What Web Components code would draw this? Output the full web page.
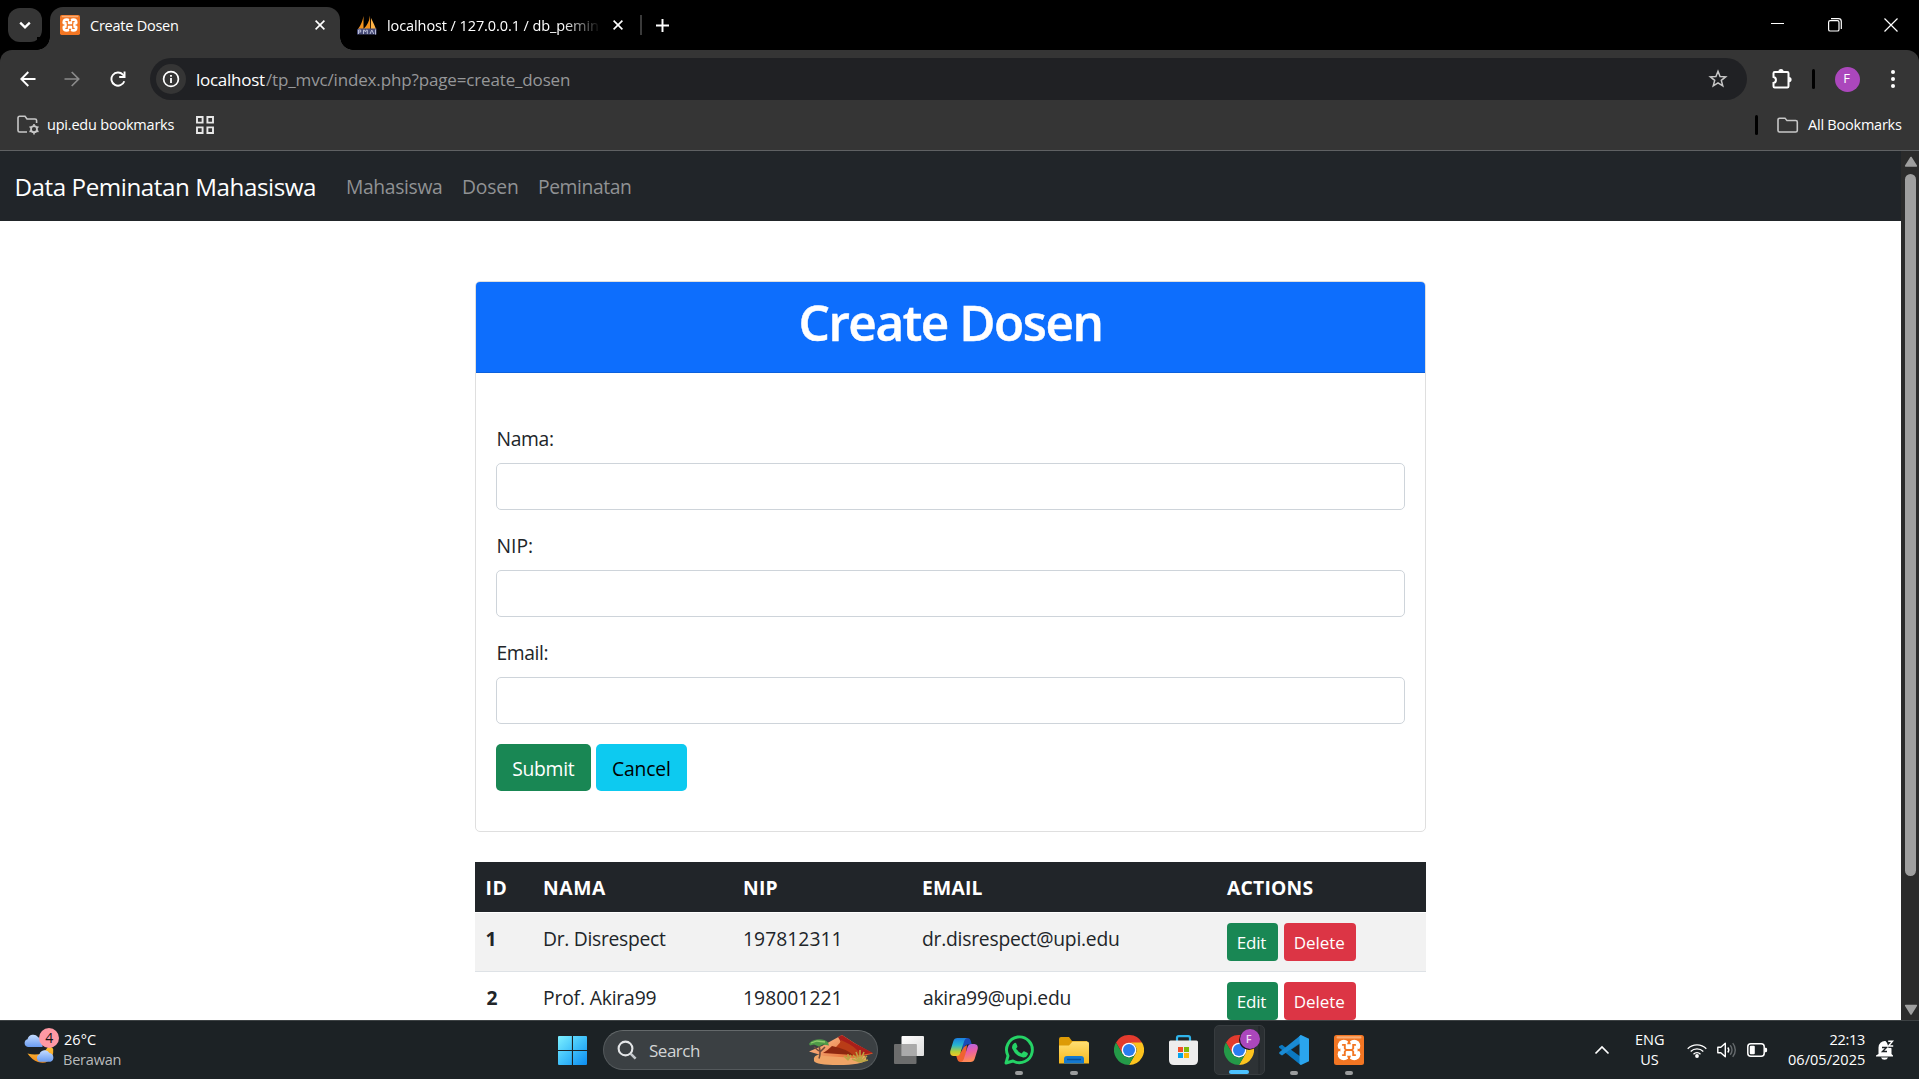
<!DOCTYPE html>
<html lang="en">
<head>
<meta charset="utf-8">
<title>Create Dosen</title>
<style>
html,body{margin:0;height:100%;overflow:hidden;background:#000}
body{font-family:"Open Sans","Noto Sans",sans-serif}
</style>
</head>
<body>
<desktop-screen></desktop-screen>
<script>
const ICONS = {
  chevdown: ['0 0 10 10', '<path d="M1 3l4 4 4-4" fill="none" stroke="currentColor" stroke-width="1.9"/>'],
  chevup: ['0 0 16 10', '<path d="M1.5 8.5L8 2l6.500 6.500" fill="none" stroke="currentColor" stroke-width="1.7"/>'],
  cross: ['0 0 10 10', '<path d="M.6.6l8.800 8.800M9.400.6L.6 9.400" stroke="currentColor" stroke-width="1.6"/>'],
  winclose: ['0 0 14 14', '<path d="M.5.5l13 13M13.500.5l-13 13" stroke="currentColor" stroke-width="1.2"/>'],
  winmin: ['0 0 14 14', '<path d="M0 5.500h13" stroke="currentColor" stroke-width="1"/>'],
  winmax: ['0 0 14 14', '<rect x=".6" y="2.600" width="10.400" height="10.400" rx="1.600" fill="none" stroke="currentColor" stroke-width="1.200"/><path d="M3 .7h7.500a2.800 2.800 0 0 1 2.800 2.800v7.500" fill="none" stroke="currentColor" stroke-width="1.200"/>'],
  plus: ['0 0 12 12', '<path d="M6 0v12M0 6h12" stroke="currentColor" stroke-width="1.800"/>'],
  back: ['0 0 16 16', '<path d="M8.300 1L1.300 8l7 7M1.500 8H15.500" fill="none" stroke="currentColor" stroke-width="1.900"/>'],
  forward: ['0 0 16 16', '<path d="M7.700 1l7 7-7 7M14.500 8H.5" fill="none" stroke="currentColor" stroke-width="1.700"/>'],
  reload: ['0 0 16 16', '<path d="M14.300 10.200A6.600 6.600 0 1 1 12.900 3.600L14.300 5" fill="none" stroke="currentColor" stroke-width="1.900"/><path d="M15.500.6v6.300H9.200V5h4.400V.6z" fill="currentColor"/>'],
  info: ['0 0 18 18', '<circle cx="9" cy="9" r="7.400" fill="none" stroke="currentColor" stroke-width="1.700"/><path d="M9 8v5M9 4.900v1.900" stroke="currentColor" stroke-width="1.800"/>'],
  star: ['0 0 20 20', '<path d="M10 2.200l2.050 5.250 5.650.350-4.400 3.600 1.450 5.500L10 13.850 5.250 16.900l1.450-5.500L2.300 7.800l5.650-.350z" fill="none" stroke="currentColor" stroke-width="1.500"/>'],
  puzzle: ['0 0 22 22', '<path d="M2.500 5.200q0-1.200 1.200-1.200H16.300q1.200 0 1.200 1.200V18.300q0 1.200-1.200 1.200H3.700q-1.200 0-1.200-1.200V14.900a3 3 0 0 0 0-5.900z" fill="none" stroke="currentColor" stroke-width="2"/><path d="M7.400 3.500a2.600 2.600 0 0 1 5.200 0zM18 9a2.600 2.600 0 0 1 0 5.200z" fill="currentColor"/>'],
  dots: ['0 0 6 20', '<g fill="currentColor"><circle cx="3" cy="3" r="2"/><circle cx="3" cy="10" r="2"/><circle cx="3" cy="17" r="2"/></g>'],
  folder: ['0 0 22 18', '<path d="M1 3q0-1.800 1.800-1.800H8L10 3.800h8.700q1.600 0 1.600 1.600v9q0 1.600-1.600 1.600H2.600Q1 16 1 14.400z" fill="none" stroke="currentColor" stroke-width="1.600"/>'],
  gearfolder: ['0 0 23 20', '<path d="M10 17H2.600Q1 17 1 15.400V3q0-1.700 1.700-1.700H8L10 4h8q1.600 0 1.600 1.600V8" fill="none" stroke="currentColor" stroke-width="1.600"/><circle cx="17" cy="14.200" r="3" fill="none" stroke="currentColor" stroke-width="1.800"/><path d="M17 9v2M17 17.500v2M12.500 11.600l1.700 1M19.800 15.800l1.700 1M12.500 16.800l1.700-1M19.800 12.600l1.700-1" stroke="currentColor" stroke-width="1.600"/>'],
  grid: ['0 0 18 18', '<path d="M1 1h5.600v5.600H1zM11.400 1H17v5.600h-5.600zM1 11.400h5.600V17H1zM11.400 11.400H17V17h-5.600z" fill="none" stroke="currentColor" stroke-width="1.900"/>'],
  xampp: ['0 0 30 30', '<rect width="30" height="30" rx="2.500" fill="#f37623"/><rect x="2.500" y="1.300" width="25" height="2.200" rx="1" fill="#fbc9a0" opacity=".65"/><g fill="#fff"><circle cx="9.800" cy="10.800" r="6.100"/><circle cx="20.200" cy="10.800" r="6.100"/><circle cx="9.800" cy="19.200" r="6.100"/><circle cx="20.200" cy="19.200" r="6.100"/></g><path d="M2.800 15l3.600-1.600v3.200zM27.200 15l-3.600-1.600v3.200zM15 4l-2 5.200h4zM15 26l-2-5.200h4z" fill="#f37623"/><path d="M8.800 9.900h2v3.600l1.300 1.500-1.300 1.500v3.600h-2M21.200 9.900h-2v3.600L17.900 15l1.300 1.500v3.600h2M12 15h6" fill="none" stroke="#f37623" stroke-width="1.900" stroke-linecap="round"/>'],
  pma: ['0 0 20 20', '<path d="M6.500 1Q5 9 1 14h5.500zM13 .5Q12 9 6.500 14h6.800z" fill="#f5931e"/><path d="M14 3q3 6 5 11h-5z" fill="#ffb347"/><path d="M0 14.500L2 13.500H19.500V19.500H0z" fill="#474c78"/><path d="M1.500 19v-4h2.200v2H2M6.500 19v-4h.9l1 2 1-2h.9v4M13 19l1.800-4 2 4M18.500 14.500v5" fill="none" stroke="#b9bcd6" stroke-width="1"/>'],
  tri: ['0 0 14 12', '<path d="M7 1.500L12.300 10H1.700z" fill="#9f9f9f" stroke="#9f9f9f" stroke-width="1.600" stroke-linejoin="round"/>'],
  tridown: ['0 0 14 12', '<path d="M7 10L12.300 1.500H1.700z" fill="#9f9f9f" stroke="#9f9f9f" stroke-width="1.600" stroke-linejoin="round"/>'],
  weather: ['0 0 36 36', '<defs><linearGradient id="c" x2="0" y2="1"><stop stop-color="#c4dcff"/><stop offset="1" stop-color="#6a9cf0"/></linearGradient><linearGradient id="m" x2="0" y2="1"><stop stop-color="#ffc436"/><stop offset="1" stop-color="#f08a1c"/></linearGradient></defs><path d="M24 18q8-2 4 10-5 8-14 5-6-2-10.500-8.500 14 4 20.500-6.500z" fill="url(#m)"/><path d="M4 18a4 4 0 0 1-.5-7.800A6 6 0 0 1 14 8q5 3 4.500 10z" fill="url(#c)"/><path d="M16 32.800a4 4 0 0 1-.5-7.600A5.500 5.500 0 0 1 25.500 24a4.600 4.600 0 0 1 1 8.800z" fill="url(#c)"/>'],
  windows: ['0 0 29 29', '<defs><linearGradient id="w" x2="1" y2="1"><stop stop-color="#7df0ff"/><stop offset=".5" stop-color="#3fc0fa"/><stop offset="1" stop-color="#0c8cf0"/></linearGradient></defs><path d="M0 1q0-1 1-1h12.900v13.900H0zM15 0h13q1 0 1 1v12.900H15zM0 15h13.900v14H1q-1 0-1-1zM15 15h14v13q0 1-1 1H15z" fill="url(#w)"/>'],
  search: ['0 0 20 20', '<circle cx="8.500" cy="8.500" r="6.900" fill="none" stroke="#e3e5e7" stroke-width="2.100"/><path d="M13.600 13.600l5 5" stroke="#c4c8cc" stroke-width="2.500"/>'],
  desert: ['0 0 66 32', '<defs><linearGradient id="s" x2="1" y2=".6"><stop stop-color="#ffc79a"/><stop offset="1" stop-color="#e2672c"/></linearGradient></defs><path d="M6 27Q4 21 14 20l36-1q10 3 8 7-4 5-28 5Q8 31 6 27z" fill="#f0a466"/><path d="M1 17.500L14 12 34 1l14 9 17 9.500-17 4.500-32-2z" fill="url(#s)"/><path d="M34 1l13 8.500L65 19l-13 2-7-6-12-7-3-5z" fill="#a81e1a"/><path d="M33 6q-1 7-17 13 16-2 28 3l9-1q-4-8-20-15z" fill="#b93c17"/><path d="M24 12q-5 5-9 7l30 2q-6-6-21-9z" fill="#8e2710"/><path d="M11 24.500q2-5 0-13M12 18l5-5M11 17l-5-4" fill="none" stroke="#6f4a3c" stroke-width="1.600"/><path d="M1 10q2-4 8-4.500 7-1 11 3l1 3-6-1-4 2-5-2-4 1z" fill="#4e9a48"/><path d="M3 9l6-2 8 1" stroke="#8fca6c" stroke-width="1.300" fill="none"/><path d="M52 28l-7-7M52 28l-4-10M52 28l0-12M52 28l4-10M52 28l7-6M52 28l-8-3M52 28l8-2M40 26l-4-4M40 26v-6M40 26l3-5" stroke="#b9a544" stroke-width="1.500"/>'],
  taskview: ['0 0 30 28', '<defs><linearGradient id="t" x2="1" y2="1"><stop stop-color="#fff"/><stop offset="1" stop-color="#ddd"/></linearGradient></defs><rect x="7.500" width="22.500" height="20" rx="1" fill="url(#t)"/><rect y="8" width="22.500" height="20" rx="1" fill="#777" opacity=".88"/><path d="M7.500 8h15v12h-15z" fill="#aaa"/>'],
  copilot: ['0 0 28 26', '<defs><linearGradient id="a" x2="0" y2="1"><stop stop-color="#1b7fe0"/><stop offset=".4" stop-color="#27b5d0"/><stop offset=".75" stop-color="#b3cf3a"/><stop offset="1" stop-color="#f5c524"/></linearGradient><linearGradient id="b" x2=".2" y2="1"><stop stop-color="#a566f2"/><stop offset=".5" stop-color="#ea5fa6"/><stop offset="1" stop-color="#ff8a55"/></linearGradient></defs><path d="M13 1h4.500q2.500 0 3.300 3l1 3.500h-4q-2.300 0-3 2.300L12 15z" fill="#1a4bb8"/><path d="M15 25h-4.500q-2.500 0-3.300-3L6 18q3.500.5 4.700-2.500L14 10l3-2z" fill="#f0622f"/><path d="M7.500 1H17q-2 .3-2.800 3l-3.600 11.500Q9.700 19 6.500 19H3.500Q-.5 18.500.3 14L3.300 4.200Q4.300 1 7.500 1z" fill="url(#a)"/><path d="M20.500 25H11q2-.3 2.800-3l3.600-11.500Q18.300 7 21.500 7h3q4 .5 3.200 5l-3 9.800q-1 3.200-4.200 3.200z" fill="url(#b)"/>'],
  whatsapp: ['0 0 30 30', '<path d="M2 28l2-7.200A12.900 12.900 0 1 1 9 26z" fill="none" stroke="#25d366" stroke-width="2.900" stroke-linejoin="round"/><path d="M10.500 8q1.200-.6 1.800.6l1.100 2.600q.2.800-1.300 2.400 2 3.600 5.500 4.900l1.700-2q.6-.6 1.400-.1l2.600 1.300q.9.500.4 2-1.200 3-4.500 2.700-7.700-1-11-8.800-.8-3.900 2.300-5.600z" fill="#25d366"/>'],
  explorer: ['0 0 30 27', '<defs><linearGradient id="f" x2="0" y2="1"><stop stop-color="#ffdf74"/><stop offset="1" stop-color="#f7b91c"/></linearGradient></defs><path d="M0 2q0-2 2-2h8l3 4h15v6H0z" fill="#dd9b06"/><path d="M0 8.500h10l3.500-4H28q2 0 2 2V26.500H0z" fill="url(#f)"/><path d="M5 26.500V22q0-3 3-3h14q3 0 3 3v4.500z" fill="#1479d0"/><path d="M8 22.500h14" stroke="#07519b" stroke-width="1.500"/>'],
  chrome: ['0 0 48 48', '<path d="M3.200 12A24 24 0 0 1 44.800 12L36 16H24L13.600 30z" fill="#e33b2e"/><path d="M44.800 12A24 24 0 0 1 24 48L34.400 30A12 12 0 0 0 24 12z" fill="#fcc31e"/><path d="M3.200 12L13.600 30A12 12 0 0 0 34.400 30L24 48A24 24 0 0 1 3.200 12z" fill="#249a48"/><circle cx="24" cy="24" r="11.800" fill="#fff"/><circle cx="24" cy="24" r="9.600" fill="#2b7cf0"/>'],
  store: ['0 0 29 30', '<path d="M8 7V3q0-1.800 1.800-1.800h9.400Q21 1.200 21 3v4" fill="none" stroke="#2fb4ea" stroke-width="2.200"/><path d="M0 7q0-1.500 1.500-1.500h26Q29 5.500 29 7v18q0 5-5 5H5q-5 0-5-5z" fill="#ededed"/><path d="M9 12h5v5H9z" fill="#f2502b"/><path d="M15 12h5v5h-5z" fill="#80b90a"/><path d="M9 18h5v5H9z" fill="#04a3ec"/><path d="M15 18h5v5h-5z" fill="#fbb80d"/>'],
  vscode: ['0 0 30 30', '<path d="M22 0L7.500 13.200 3 9.700 0 11.200v1.300L19.500 28.300 22 30V22L12 14.800 22 8z" fill="#0b78c0"/><path d="M.3 18.800L3 20.400 22 7V0L.3 17.300z" fill="#1a8bd4"/><path d="M22 0l8 3.700v22.600L22 30l-1.500-1V1z" fill="#2aa5ee"/>'],
  wifi: ['0 0 20 15', '<g fill="none" stroke="#fff" stroke-width="1.300"><path d="M.7 5.700a13.200 13.200 0 0 1 18.600 0M3.700 8.500a9 9 0 0 1 12.600 0M6.500 11.200a5 5 0 0 1 7 0"/></g><circle cx="10" cy="13" r="1.900" fill="#fff"/>'],
  speaker: ['0 0 20 16', '<path d="M.8 5.300h3L8.300 1.200v13.600L3.800 10.700h-3z" fill="none" stroke="#fff" stroke-width="1.400" stroke-linejoin="round"/><path d="M10.800 5.500a4 4 0 0 1 0 5" fill="none" stroke="#fff" stroke-width="1.400"/><path d="M13.200 3.300a7 7 0 0 1 0 9.400M15.700 1.100a10.500 10.500 0 0 1 0 13.800" fill="none" stroke="#666b6e" stroke-width="1.400"/>'],
  battery: ['0 0 21 14' , '<rect x=".8" y=".8" width="16.400" height="12.400" rx="3" fill="none" stroke="#fff" stroke-width="1.500"/><rect x="2.800" y="2.800" width="5" height="8.400" rx="1" fill="#fff"/><path d="M18 4.700h1q1.200 0 1.200 2.300T19 9.300h-1z" fill="#fff"/>'],
  bell: ['0 0 18 20', '<path d="M2.500 14V7.500a6.300 6.300 0 0 1 7-6.500l6 7.500V14l1.500 1.500v1H0v-1zM5 17.500h7q-.8 2.200-3.500 2.200T5 17.500z" fill="#fff"/><path d="M6 7.500h4.500L6.500 11.500H11" fill="none" stroke="#1c2225" stroke-width="1.400"/><path d="M10.500 0H18v7.500l-5.500.5z" fill="#1c2225"/><path d="M12.200 1.300h4.300l-4 4.700h4.700" fill="none" stroke="#fff" stroke-width="1.400"/>']
};
const sheet = (el, html) => { el.attachShadow({mode:'open'}).innerHTML = html; };

/* Vector icon: name, w, h */
customElements.define('ui-icon', class extends HTMLElement {
  connectedCallback(){
    if (this.shadowRoot) return;
    const [vb, body] = ICONS[this.getAttribute('name')];
    const w = this.getAttribute('w'), h = this.getAttribute('h') || w;
    sheet(this, `<style>:host{display:block;flex:none;width:${w}px;height:${h}px}svg{display:block}</style><svg width="${w}" height="${h}" viewBox="${vb}" preserveAspectRatio="none">${body}</svg>`);
  }
});

/* One line of text tracked to an exact ink width: w, size, weight; low = extra space above */
const pen = document.createElement('canvas').getContext('2d');
customElements.define('ui-text', class extends HTMLElement {
  connectedCallback(){
    if (this.shadowRoot) return;
    const w = +this.getAttribute('w'), s = +this.getAttribute('size'), wt = this.getAttribute('weight') || 400;
    const t = this.textContent;
    pen.font = `${wt} ${s}px "Open Sans"`;
    const m = pen.measureText(t);
    const ink = m.actualBoundingBoxLeft + m.actualBoundingBoxRight;
    const ls = t.length > 1 ? (w - ink) / (t.length - 1) : 0;
    const low = this.getAttribute('low') || (s > 18 && s < 40 ? 2 : 0);
    sheet(this, `<style>:host{display:block;flex:none;width:${w}px;padding-top:${low}px;line-height:1.36;font-size:${s}px;font-weight:${wt};white-space:pre}
      span{display:block;margin-left:${m.actualBoundingBoxLeft}px;margin-right:-20px;letter-spacing:${ls.toFixed(3)}px}</style><span><slot></slot></span>`);
  }
});

customElements.define('browser-tabs', class extends HTMLElement {
  connectedCallback(){ sheet(this, `<style>
    :host{display:flex;height:50px;background:#000;color:#fff;box-sizing:border-box;padding-left:8px}
    .find{width:34px;height:34px;margin-top:8px;border-radius:12px;background:#353535;display:flex;align-items:center;justify-content:center;padding:0;box-sizing:border-box}
    .tab{height:43px;margin-top:7px;display:flex;align-items:center;box-sizing:border-box;padding-bottom:7px}
    .on{background:#353535;border-radius:13px 13px 0 0;width:290px;margin-left:8px;padding-left:10px;padding-right:15px;position:relative}
    .on::before,.on::after{content:"";position:absolute;bottom:0;width:13px;height:13px}
    .on::before{left:-13px;background:radial-gradient(circle at 0 0,#000 12.500px,#353535 13px)}
    .on::after{right:-13px;background:radial-gradient(circle at 100% 0,#000 12.500px,#353535 13px)}
    .off{width:300px;padding-left:17px;box-sizing:border-box}
    .fade{width:212px;margin-left:11px;-webkit-mask-image:linear-gradient(90deg,#000 175px,rgba(0,0,0,.1) 209px)}
    .sep{width:2px;height:20px;background:#3a3a3a;align-self:flex-start;margin-top:15px}
    .plus{margin:19px 0 0 14px}
    .win{margin-left:auto;display:flex;gap:42.500px;margin-top:18px;margin-right:21px}
    </style>
    <div class="find"><ui-icon name="chevdown" w="12"></ui-icon></div>
    <div class="tab on"><ui-icon name="xampp" w="20"></ui-icon><ui-text low="2" w="88" size="14.5" style="margin-left:10px">Create Dosen</ui-text><ui-icon name="cross" w="10" style="margin-left:auto"></ui-icon></div>
    <div class="tab off"><ui-icon name="pma" w="20"></ui-icon><div class="fade"><ui-text low="2" w="210" size="14.5">localhost / 127.0.0.1 / db_pemin</ui-text></div><ui-icon name="cross" w="10" style="margin-left:13px"></ui-icon></div>
    <div class="sep"></div><div class="plus"><ui-icon name="plus" w="13"></ui-icon></div>
    <div class="win"><ui-icon name="winmin" w="14"></ui-icon><ui-icon name="winmax" w="14"></ui-icon><ui-icon name="winclose" w="14"></ui-icon></div>`); }
});

customElements.define('browser-toolbar', class extends HTMLElement {
  connectedCallback(){ sheet(this, `<style>
    :host{display:block;background:#000;color:#fff}
    .box{background:#353535;border-radius:12px 12px 0 0;height:101px;box-sizing:border-box;border-bottom:1px solid #5f6163}
    .nav{display:flex;align-items:center;height:58px;padding:0 23.500px 0 20px}
    .omni{display:flex;align-items:center;width:1597px;height:42px;border-radius:21px;background:#202124;margin-left:24px;box-sizing:border-box;padding:0 19px 0 6px}
    .i{width:30px;height:30px;border-radius:50%;background:#353535;display:flex;align-items:center;justify-content:center}
    .bar{width:3px;height:20px;border-radius:2px;background:#000}
    .av{width:25px;height:25px;border-radius:50%;background:#ab47bc;display:flex;align-items:center;justify-content:center}
    .marks{display:flex;align-items:center;height:34px;padding:0 17px 0 17px}
    ui-icon{color:inherit}
    </style><div class="box">
    <div class="nav"><ui-icon name="back" w="16"></ui-icon><ui-icon name="forward" w="16" style="margin-left:28px;color:#8b8b8b"></ui-icon><ui-icon name="reload" w="16" style="margin-left:30px"></ui-icon>
      <div class="omni"><div class="i"><ui-icon name="info" w="18"></ui-icon></div><ui-text low="1.5" w="68" size="17" style="margin-left:11px">localhost</ui-text><ui-text low="1.5" w="304" size="17" style="margin-left:1px;color:#969799">/tp_mvc/index.php?page=create_dosen</ui-text><ui-icon name="star" w="20" style="margin-left:auto;color:#c7c7c7"></ui-icon></div>
      <ui-icon name="puzzle" w="22" style="margin-left:23.500px"></ui-icon><div class="bar" style="margin-left:19.500px"></div><div class="av" style="margin-left:20px"><ui-text w="6.5" size="13">F</ui-text></div><ui-icon name="dots" w="6" h="20" style="margin-left:auto"></ui-icon></div>
    <div class="marks"><ui-icon name="gearfolder" w="23" h="20" style="color:#c7c7c7"></ui-icon><ui-text w="126.5" size="14.5" style="margin-left:8px">upi.edu bookmarks</ui-text><ui-icon name="grid" w="18" style="margin-left:21px;color:#e8e8e8"></ui-icon>
      <div class="bar" style="margin-left:auto"></div><ui-icon name="folder" w="22" h="17" style="margin-left:19px;color:#c7c7c7"></ui-icon><ui-text w="94" size="14.5" style="margin-left:9px">All Bookmarks</ui-text></div>
    </div>`); }
});

customElements.define('site-nav', class extends HTMLElement {
  connectedCallback(){ sheet(this, `<style>
    :host{display:flex;align-items:center;height:70px;background:#212529;color:#fff;padding-left:16.500px}
    nav{display:flex;gap:21px;margin-left:32px;color:#909294}</style>
    <ui-text w="298.5" size="24.2">Data Peminatan Mahasiswa</ui-text>
    <nav><ui-text w="95" size="19.3">Mahasiswa</ui-text><ui-text w="55" size="19.3">Dosen</ui-text><ui-text w="92" size="19.3">Peminatan</ui-text></nav>`); }
});

customElements.define('form-field', class extends HTMLElement {
  connectedCallback(){ sheet(this, `<style>
    :host{display:block;margin-bottom:20px;color:#212529}
    label{display:flex;align-items:center;height:30px;margin-bottom:10px;padding-left:1.500px}
    input{display:block;box-sizing:border-box;width:100%;height:47px;border:1px solid #ced4da;border-radius:5px;background:#fff;outline:0}</style>
    <label><slot></slot></label><input>`); }
});

/* Button: kind = success | info | danger, w, h */
customElements.define('app-button', class extends HTMLElement {
  connectedCallback(){
    const k = {success:['#198754','#fff'], info:['#0dcaf0','#000'], danger:['#dc3545','#fff']}[this.getAttribute('kind')];
    sheet(this, `<style>:host{display:flex;flex:none}button{all:unset;box-sizing:border-box;display:flex;align-items:center;justify-content:center;padding-top:1px;width:${this.getAttribute('w')}px;height:${this.getAttribute('h')}px;background:${k[0]};color:${k[1]};border-radius:${this.getAttribute('h')>40?5:4}px}</style><button><slot></slot></button>`);
  }
});

customElements.define('dosen-card', class extends HTMLElement {
  connectedCallback(){ sheet(this, `<style>
    :host{display:block;box-sizing:border-box;height:551px;border:1px solid #dfdfdf;border-radius:5px;overflow:hidden;background:#fff}
    header{height:91px;box-sizing:border-box;padding:11px 0 0;display:flex;justify-content:center;align-items:flex-start;background:#0d6efd;border-bottom:1px solid #0b60dd;color:#fff}
    h1{margin:0;font-weight:inherit;display:flex;align-items:center;height:60px;-webkit-text-stroke:.5px #fff}
    form{padding:50px 20px 0}
    .row{display:flex;gap:5px}</style>
    <header><h1><ui-text w="300" size="49.5" weight="600">Create Dosen</ui-text></h1></header>
    <form><form-field><ui-text w="55.5" size="19.3">Nama:</ui-text></form-field>
    <form-field><ui-text w="34.5" size="19.3">NIP:</ui-text></form-field>
    <form-field><ui-text w="50" size="19.3">Email:</ui-text></form-field>
    <div class="row"><app-button kind="success" w="95" h="47"><ui-text w="62.5" size="19.3">Submit</ui-text></app-button><app-button kind="info" w="91" h="47"><ui-text w="57" size="19.3">Cancel</ui-text></app-button></div></form>`); }
});

customElements.define('dosen-table', class extends HTMLElement {
  connectedCallback(){
    const t = (s,w,b) => `<ui-text size="19.3" w="${w}" weight="${b||400}">${s}</ui-text>`;
    const row = (cls,n,nw,name,w1,nip,mail,w2) => `<div class="r ${cls}"><div>${t(n,nw,700)}</div><div>${t(name,w1)}</div><div>${t(nip,94.5)}</div><div>${t(mail,w2)}</div><div class="act"><app-button kind="success" w="51" h="38"><ui-text w="28.5" size="17">Edit</ui-text></app-button><app-button kind="danger" w="72" h="38"><ui-text w="49.5" size="17">Delete</ui-text></app-button></div></div>`;
    sheet(this, `<style>
    :host{display:block;color:#212529}
    .r{display:grid;grid-template-columns:57.500px 200px 179px 304.500px 1fr;align-items:start;padding-left:11.500px;box-sizing:border-box}
    .r>div{display:flex;align-items:center;height:30px;margin-top:10px}
    .head{height:51px;background:#212529;color:#fff;border-bottom:1px solid #fff}
    .body{height:59px;border-bottom:1px solid #dee2e6}
    .odd{background:#f2f2f2}
    .r>.act{height:38px;gap:6px;margin-left:-1px}</style>
    <div class="r head"><div>${t('ID',20,700)}</div><div>${t('NAMA',62,700)}</div><div>${t('NIP',33.500,700)}</div><div>${t('EMAIL',59.500,700)}</div><div style="margin-left:-.5px">${t('ACTIONS',85.500,700)}</div></div>
    ${row('body odd','1',8,'Dr. Disrespect',122,'197812311','dr.disrespect@upi.edu',196)}
    ${row('body','2',10,'Prof. Akira99',111.5,'198001221','akira99@upi.edu',147.5)}`); }
});

customElements.define('scroll-rail', class extends HTMLElement {
  connectedCallback(){ sheet(this, `<style>
    :host{display:flex;flex-direction:column;align-items:center;width:18px;background:#2b2b2b;box-sizing:border-box;padding:5px 0 4px 1px;flex:none}
    .thumb{width:11px;height:702px;border-radius:6px;background:#9f9f9f;margin-top:6px}</style>
    <ui-icon name="tri" w="14" h="12"></ui-icon><div class="thumb"></div><ui-icon name="tridown" w="14" h="12" style="margin-top:auto"></ui-icon>`); }
});

customElements.define('task-app', class extends HTMLElement {
  connectedCallback(){
    const run = this.hasAttribute('running');
    sheet(this, `<style>:host{display:flex;flex:none;width:55px;height:59px;align-items:center;justify-content:center;position:relative}
    i{position:absolute;bottom:5px;left:calc(50% - 4px);width:8px;height:4px;border-radius:2px;background:#9a9c9d}</style><slot></slot>${run?'<i></i>':''}`); }
});

customElements.define('task-bar', class extends HTMLElement {
  connectedCallback(){ sheet(this, `<style>
    :host{display:flex;align-items:center;height:59px;background:#1c2225;box-sizing:border-box;border-top:1px solid #3d4244;color:#fff}
    .weather{display:flex;align-items:center;width:534px;padding-left:24px;height:59px}
    .wx{position:relative;margin-top:-6px}
    .badge{position:absolute;left:15px;top:-1px;width:20px;height:20px;border-radius:50%;background:#ff99a4;color:#111;display:flex;align-items:center;justify-content:center}
    .two{display:flex;flex-direction:column}
    .pill{display:flex;align-items:center;box-sizing:border-box;width:275px;height:40px;border-radius:20px;background:#3b4043;border:1px solid #54595c;border-top-color:#64696b;padding:0 3px 0 13px;margin:0 3px 0 16px}
    .apps{display:flex}
    .live{width:51px;height:50px;box-sizing:border-box;border:1px solid #373c3f;border-radius:5px;background:linear-gradient(90deg,#2d3235 43px,#1f2427 44px,#2a2f32 45px);position:relative;display:flex;align-items:center;padding-left:9px;margin-left:1px}
    .live b{position:absolute;left:25px;top:3px;width:20px;height:20px;border-radius:50%;background:#ab47bc;display:flex;align-items:center;justify-content:center;color:#eedcf3;box-shadow:-1px 1px 0 #14181a}
    .live u{position:absolute;left:14px;bottom:0;width:20px;height:4px;border-radius:2px;background:#4cc2ff}
    .tray{margin-left:auto;display:flex;align-items:center;padding-right:25px}
    </style>
    <div class="weather"><div class="wx"><ui-icon name="weather" w="36"></ui-icon><div class="badge"><ui-text w="7.5" size="14">4</ui-text></div></div><div class="two" style="margin-left:4px"><ui-text w="32" size="14.5">26°C</ui-text><ui-text w="56.5" size="14.5" style="color:#b8babb">Berawan</ui-text></div></div>
    <ui-icon name="windows" w="29"></ui-icon>
    <div class="pill"><ui-icon name="search" w="20"></ui-icon><ui-text low="2" w="51" size="17" style="margin-left:12px;color:#d3d5d6">Search</ui-text><ui-icon name="desert" w="66" h="32" style="margin-left:auto"></ui-icon></div>
    <div class="apps">
    <task-app><ui-icon name="taskview" w="30" h="28"></ui-icon></task-app>
    <task-app><ui-icon name="copilot" w="28" h="26"></ui-icon></task-app>
    <task-app running><ui-icon name="whatsapp" w="30"></ui-icon></task-app>
    <task-app running><ui-icon name="explorer" w="30" h="27"></ui-icon></task-app>
    <task-app><ui-icon name="chrome" w="30"></ui-icon></task-app>
    <task-app><ui-icon name="store" w="29" h="30"></ui-icon></task-app>
    <task-app><div class="live"><ui-icon name="chrome" w="30"></ui-icon><b><ui-text w="5.5" size="11" weight="600">F</ui-text></b><u></u></div></task-app>
    <task-app running><ui-icon name="vscode" w="30"></ui-icon></task-app>
    <task-app running><ui-icon name="xampp" w="30"></ui-icon></task-app></div>
    <div class="tray"><ui-icon name="chevup" w="16" h="10"></ui-icon>
    <div class="two" style="align-items:center;margin-left:26px"><ui-text w="28" size="14.5">ENG</ui-text><ui-text w="17.500" size="14.5">US</ui-text></div>
    <ui-icon name="wifi" w="20" h="15" style="margin-left:23px"></ui-icon><ui-icon name="speaker" w="20" h="16" style="margin-left:10px"></ui-icon><ui-icon name="battery" w="21" h="14" style="margin-left:10px"></ui-icon>
    <div class="two" style="align-items:flex-end;margin-left:20px"><ui-text w="35.5" size="14.5">22:13</ui-text><ui-text w="77" size="14.5">06/05/2025</ui-text></div>
    <ui-icon name="bell" w="18" h="20" style="margin-left:11px"></ui-icon></div>`); }
});

customElements.define('desktop-screen', class extends HTMLElement {
  connectedCallback(){ sheet(this, `<style>
    :host{display:flex;flex-direction:column;width:1919px;height:1079px;overflow:hidden}
    browser-tabs,browser-toolbar,task-bar{flex:none}
    .view{flex:1;min-height:0;display:flex;background:#fff}
    .page{flex:1;min-width:0;overflow:hidden;background:#fff}
    main{width:951px;margin:60px auto 0}
    dosen-table{margin-top:30px}</style>
    <browser-tabs></browser-tabs><browser-toolbar></browser-toolbar>
    <div class="view"><div class="page"><site-nav></site-nav><main><dosen-card></dosen-card><dosen-table></dosen-table></main></div><scroll-rail></scroll-rail></div>
    <task-bar></task-bar>`); }
});
</script>
</body>
</html>
